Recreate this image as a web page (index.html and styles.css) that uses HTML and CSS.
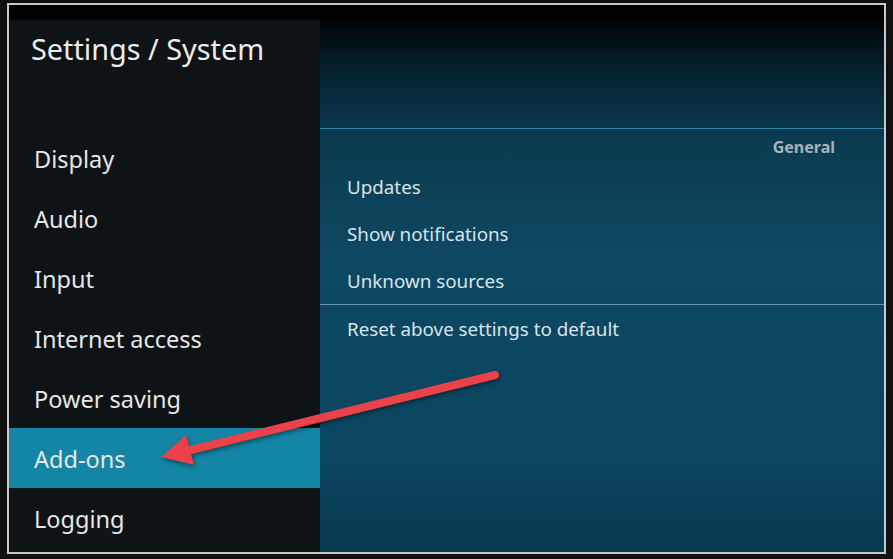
FILE: index.html
```html
<!DOCTYPE html>
<html lang="en">
<head>
    <meta charset="UTF-8">
    <title>Settings / System</title>
    <link rel="stylesheet" href="styles.css">
</head>
<body>
    <div class="frame">
        <div class="topband"></div>
        <div class="main">
            <div class="sidebar">
                <h1 class="title">Settings / System</h1>
                <ul class="menu">
                    <li>Display</li>
                    <li>Audio</li>
                    <li>Input</li>
                    <li>Internet access</li>
                    <li>Power saving</li>
                    <li class="active">Add-ons</li>
                    <li>Logging</li>
                </ul>
            </div>
            <div class="content">
                <div class="group">
                    <div class="group-label">General</div>
                    <div class="item">Updates</div>
                    <div class="item">Show notifications</div>
                    <div class="item">Unknown sources</div>
                </div>
                <div class="item">Reset above settings to default</div>
            </div>
        </div>

        <!-- 紅色箭頭標註 -->
        <svg class="arrow" width="879" height="551" viewBox="0 0 879 551">
            <line x1="486" y1="370" x2="178" y2="446" stroke="#ea4248" stroke-width="8" stroke-linecap="round"/>
            <polygon points="152,452 177,430 185,460" fill="#ea4248"/>
        </svg>
    </div>
</body>
</html>
```

FILE: styles.css
```css
body {
    margin: 0;
    background-color: #111;
    font-family: 'Noto Sans', 'Open Sans', sans-serif;
}
.frame {
    position: relative;
    width: 875px;
    height: 547px;
    margin: 3px 0 0 7px;
    border: 2px solid #c8c8c8;
    display: flex;
    flex-direction: column;
    background-color: #000;
}
.topband {
    height: 15px;
    background-color: #000;
}
.main {
    flex: 1;
    display: flex;
}
.sidebar {
    width: 311px;
    background-color: #0e1316;
    color: #e6e6e6;
}
.title {
    margin: 0;
    height: 108px;
    box-sizing: border-box;
    padding: 9px 0 0 22px;
    font-size: 28.8px;
    font-weight: normal;
    line-height: 40px;
    color: #ececec;
}
.menu {
    list-style: none;
    margin: 0;
    padding: 0;
}
.menu li {
    height: 60px;
    line-height: 62px;
    overflow: hidden;
    padding-left: 25px;
    font-size: 23.5px;
}
.menu li.active {
    background-color: #1386a6;
}
/* 右側內容區，由黑漸層到藍綠 */
.content {
    flex: 1;
    padding-top: 108px;
    color: #dbe3e7;
    background: linear-gradient(180deg, #010406 0%, #06202d 9%, #0b3b50 22%, #0d4862 45%, #0b4661 80%, #083a50 100%);
}
.group {
    border-top: 1px solid #2f86a8;
    border-bottom: 1px solid #6c95a5;
}
.group-label {
    height: 34px;
    line-height: 36px;
    text-align: right;
    padding-right: 49px;
    font-size: 16px;
    font-weight: bold;
    color: #a9b2b8;
}
.item {
    height: 47px;
    line-height: 49px;
    overflow: hidden;
    padding-left: 27px;
    font-size: 18.8px;
}
.arrow {
    position: absolute;
    left: 0;
    top: 0;
    filter: drop-shadow(1px 2px 2px rgba(0, 0, 0, 0.45));
    pointer-events: none;
}
```
